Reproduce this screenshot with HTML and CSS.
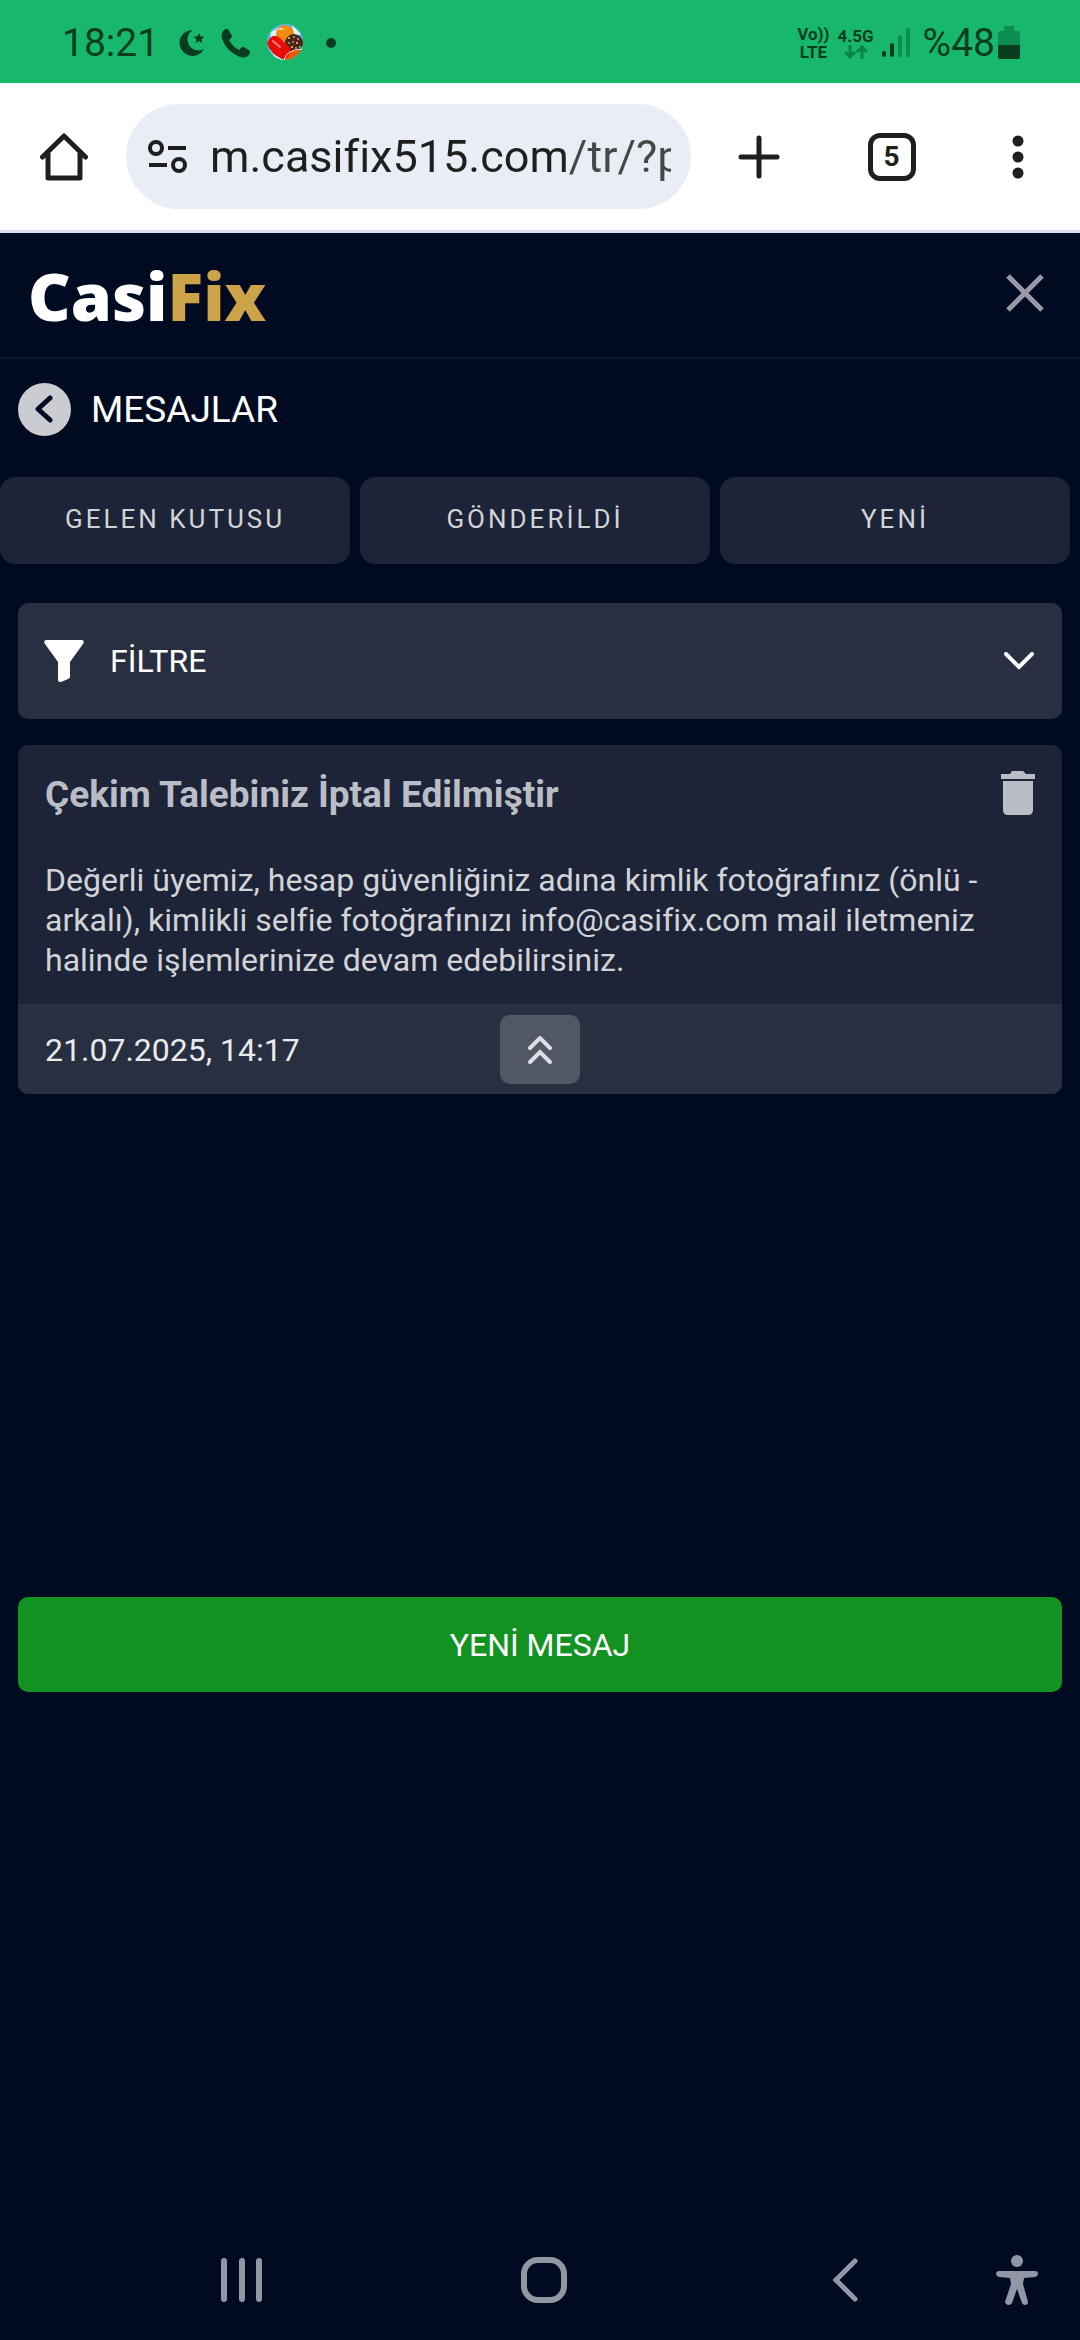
FILE: index.html
```html
<!DOCTYPE html>
<html lang="tr">
<head>
    <meta charset="UTF-8">
    <meta name="viewport" content="width=device-width, initial-scale=1.0">
    <title>CasiFix - Mesajlar</title>
    <link rel="stylesheet" href="styles.css">
</head>
<body>
    <div class="statusbar">
        <div class="status-left">
            <span class="time">18:21</span>
            <svg width="26" height="28" viewBox="0 0 26 28"><path d="M14 1A13 13 0 1 0 25 20A10.500 10.500 0 0 1 14 1Z" fill="#073d1f"/><path d="M20 4l1.500 3.300 3.800.400-2.800 2.500.800 3.800-3.300-1.900-3.300 1.900.800-3.800-2.800-2.500 3.800-.400z" fill="#073d1f"/></svg>
            <svg width="30" height="30" viewBox="0 0 30 30"><path d="M2 3Q5 0 7 1L11 8Q11 10 8 12Q11 18 18 22Q21 18 23 19L29 23Q30 25 27 28Q23 31 17 28Q6 23 2 13Q-1 7 2 3Z" fill="#073d1f"/></svg>
            <svg width="37" height="37" viewBox="0 0 37 37">
                <circle cx="18" cy="18" r="18" fill="#58b9ee"/>
                <path d="M4 8L13 3L10 12L3 16ZM25 1L34 10L27 12ZM2 25L17 37L8 33Z" fill="#e2f6ff"/>
                <ellipse cx="18" cy="10" rx="9" ry="9" fill="#f48a12"/>
                <ellipse cx="14" cy="5" rx="3" ry="1" fill="#ffd987"/>
                <circle cx="27" cy="19" r="9" fill="#4b2617"/>
                <path d="M16 36Q18 26 34 26Q29 36 16 36Z" fill="#ec5607"/>
                <path d="M3 14Q8 9 14 15L24 25Q23 34 15 35Q3 30 0 19Z" fill="#e90b09"/>
                <path d="M6 17L13 23" stroke="#ff8175" stroke-width="2" stroke-linecap="round"/>
                <path d="M17 36Q19 26 35 25" fill="none" stroke="#fff0d4" stroke-width="1"/>
                <g fill="#f7d84a"><circle cx="22" cy="14" r="1"/><circle cx="30" cy="19" r="1"/><circle cx="25" cy="23" r="1"/></g>
                <g fill="#77d35d"><circle cx="27" cy="13" r="1"/><circle cx="22" cy="19" r="1"/><circle cx="33" cy="23" r="1"/></g>
                <g fill="#ee83bd"><circle cx="31" cy="15" r="1"/><circle cx="26" cy="18" r="1"/><circle cx="29" cy="24" r="1"/></g>
            </svg>
            <span class="dot"></span>
        </div>
        <div class="status-right">
            <span class="volte"><span>Vo))</span><span>LTE</span></span>
            <span class="network">
                <span>4.5G</span>
                <svg width="24" height="14" viewBox="0 0 24 14"><path d="M6 0V12M1 7L6 12L11 7M18 14V2M13 7L18 2L23 7" fill="none" stroke="#0a8549" stroke-width="3"/></svg>
            </span>
            <svg class="signal" width="28" height="31" viewBox="0 0 28 31"><g fill="none" stroke-width="4" stroke-linecap="round"><path d="M2 26V28M10 18V28" stroke="#073d1f"/><path d="M18 10V28M26 3V28" stroke="#0d8e50"/></g></svg>
            <span class="percent">%48</span>
            <svg width="22" height="34" viewBox="0 0 22 34"><path d="M6 0H16V5H19Q22 5 22 8V20H0V8Q0 5 3 5H6Z" fill="#0d8e50"/><path d="M0 19H22V31Q22 33 19 33H3Q0 33 0 31Z" fill="#073d1f"/></svg>
        </div>
    </div>

    <div class="toolbar">
        <button class="home" aria-label="Ana sayfa">
            <svg width="48" height="48" viewBox="0 0 48 48"><path d="M2.500 24L24 3L45.500 24M8 19V45H40V19" fill="none" stroke="#1f1f1f" stroke-width="5" stroke-linecap="round" stroke-linejoin="round"/></svg>
        </button>
        <div class="address">
            <svg width="40" height="34" viewBox="0 0 40 34"><g fill="none" stroke="#1f1f1f" stroke-width="4"><circle cx="8" cy="8" r="6"/><circle cx="31" cy="25" r="6"/><path d="M20 8H38M1 25H19"/></g></svg>
            <input type="text" class="url" aria-label="Adres" value="m.casifix515.com/tr/?p">
        </div>
        <button class="new-tab" aria-label="Yeni sekme">
            <svg width="42" height="44" viewBox="0 0 42 44"><path d="M21 3V41M3 22H39" fill="none" stroke="#1f1f1f" stroke-width="5" stroke-linecap="round"/></svg>
        </button>
        <button class="tabs-count"><span>5</span></button>
        <button class="more" aria-label="Menü">
            <svg width="12" height="44" viewBox="0 0 12 44"><g fill="#1f1f1f"><circle cx="6" cy="6" r="5.500"/><circle cx="6" cy="22" r="5.500"/><circle cx="6" cy="38" r="5.500"/></g></svg>
        </button>
    </div>

    <header class="header">
        <a href="#" class="logo">Casi<span>Fix</span></a>
        <button class="close" aria-label="Kapat">
            <svg width="38" height="38" viewBox="0 0 38 38"><path d="M2 2L36 36M36 2L2 36" fill="none" stroke="#989ba7" stroke-width="5"/></svg>
        </button>
    </header>

    <main class="content">
        <div class="page-title">
            <button class="back" aria-label="Geri">
                <svg width="18" height="28" viewBox="0 0 18 28"><path d="M15 3L3 14L15 25" fill="none" stroke="#000b21" stroke-width="5" stroke-linecap="round" stroke-linejoin="round"/></svg>
            </button>
            <h1>MESAJLAR</h1>
        </div>

        <nav class="tabs">
            <button>GELEN KUTUSU</button>
            <button>GÖNDERİLDİ</button>
            <button>YENİ</button>
        </nav>

        <button class="filter">
            <svg width="40" height="42" viewBox="0 0 40 42"><path d="M2 0H38Q41 1 39 4L26 22V37Q26 38 24 39L17 42Q14 42 14 40V22L1 4Q-1 1 2 0Z" fill="#fff"/></svg>
            <span>FİLTRE</span>
            <svg class="arrow" width="30" height="18" viewBox="0 0 30 18"><path d="M2 2L15 15L28 2" fill="none" stroke="#fff" stroke-width="4" stroke-linecap="round"/></svg>
        </button>

        <div class="messages">
            <article class="message">
                <div class="message-head">
                    <h2>Çekim Talebiniz İptal Edilmiştir</h2>
                    <button class="delete" aria-label="Sil">
                        <svg width="34" height="44" viewBox="0 0 34 44"><path d="M0 3H9L11 0H22L25 3H34V8H0ZM2 10H32V39Q32 44 27 44H7Q2 44 2 39Z" fill="#bbbdc6"/></svg>
                    </button>
                </div>
                <p class="message-text">Değerli üyemiz, hesap güvenliğiniz adına kimlik fotoğrafınız (önlü - arkalı), kimlikli selfie fotoğrafınızı info@casifix.com mail iletmeniz halinde işlemlerinize devam edebilirsiniz.</p>
                <div class="message-foot">
                    <time>21.07.2025, 14:17</time>
                    <button class="collapse" aria-label="Kapat">
                        <svg width="24" height="28" viewBox="0 0 24 28"><path d="M2 12L12 2L22 12M2 26L12 16L22 26" fill="none" stroke="#dedfe4" stroke-width="4" stroke-linecap="round"/></svg>
                    </button>
                </div>
            </article>
        </div>

        <button class="new-message">YENİ MESAJ</button>
    </main>

    <nav class="bottombar">
        <button aria-label="Son uygulamalar">
            <svg width="42" height="44" viewBox="0 0 42 44"><path d="M3 3V41M21 3V41M38 3V41" fill="none" stroke="#9297a6" stroke-width="6" stroke-linecap="round"/></svg>
        </button>
        <button aria-label="Ana ekran">
            <svg width="46" height="46" viewBox="0 0 46 46"><rect x="3" y="3" width="40" height="40" rx="14" fill="none" stroke="#9297a6" stroke-width="6"/></svg>
        </button>
        <button aria-label="Geri">
            <svg width="26" height="44" viewBox="0 0 26 44"><path d="M23 3L4 22L23 41" fill="none" stroke="#9297a6" stroke-width="5" stroke-linecap="round"/></svg>
        </button>
        <button class="access" aria-label="Erişilebilirlik">
            <svg width="42" height="52" viewBox="0 0 42 52"><g fill="#9297a6"><circle cx="21" cy="7" r="6"/><path d="M3 17H39Q42 17 42 20Q42 22 39 23L28 24L27 30L32 48Q32 51 29 51Q27 51 26 49L21 35L16 49Q15 51 12 51Q9 50 9 48L15 30L14 24L3 23Q0 22 0 20Q0 17 3 17Z"/></g></svg>
        </button>
    </nav>
</body>
</html>
```
FILE: styles.css
```css
*{
    padding: 0;
    margin: 0;
    box-sizing: border-box;
}
body{
    min-height: 100vh;
    display: flex;
    flex-direction: column;
    background: #000b21;
    color: #fff;
    font-family: Roboto, "Noto Sans", sans-serif;
    font-size: 32px;
}
button{
    border: none;
    background: none;
    color: inherit;
    font: inherit;
    cursor: pointer;
    display: flex;
    justify-content: center;
    align-items: center;
}
svg{
    display: block;
    flex: none;
}

/* status bar */
.statusbar{
    height: 83px;
    padding: 2px 60px 0 62px;
    background: #18b86c;
    color: #073d1f;
    display: flex;
    justify-content: space-between;
    align-items: center;
}
.status-left{
    display: flex;
    align-items: center;
    gap: 16px;
}
.time,
.percent{
    font-size: 39px;
    line-height: 48px;
}
.time{
    margin-right: 4px;
}
.dot{
    width: 10px;
    height: 10px;
    margin-left: 6px;
    border-radius: 50%;
    background: #073d1f;
}
.status-right{
    display: flex;
    align-items: center;
    gap: 3px;
}
.volte,
.network{
    margin-right: 5px;
    display: flex;
    flex-direction: column;
    align-items: center;
    font-size: 17px;
    line-height: 18px;
    font-weight: 700;
}
.signal{
    margin-right: 10px;
}

/* browser toolbar */
.toolbar{
    height: 150px;
    padding-left: 40px;
    background: #fff;
    border-bottom: 3px solid #dae0ea;
    display: flex;
    align-items: center;
}
.home{
    margin-right: 38px;
}
.address{
    flex: 1;
    min-width: 0;
    height: 105px;
    padding: 0 20px 0 22px;
    border-radius: 53px;
    background: #e8edf6;
    display: flex;
    align-items: center;
    gap: 22px;
}
.url{
    flex: 1;
    min-width: 0;
    height: 60px;
    border: none;
    outline: none;
    font: 45px Roboto, sans-serif;
    color: transparent;
    /* the domain is darker than the path */
    background: linear-gradient(90deg, #1f1f1f 355px, #474747 355px);
    -webkit-background-clip: text;
    background-clip: text;
}
.new-tab{
    width: 136px;
    height: 105px;
}
.tabs-count{
    width: 129px;
    height: 105px;
}
.tabs-count span{
    width: 48px;
    height: 48px;
    border: 5px solid #1f1f1f;
    border-radius: 12px;
    color: #1f1f1f;
    font-size: 28px;
    line-height: 38px;
    font-weight: 700;
}
.more{
    width: 124px;
    height: 105px;
}

/* site header */
.header{
    height: 126px;
    padding: 0 36px 0 28px;
    border-bottom: 2px solid #0f172e;
    display: flex;
    justify-content: space-between;
    align-items: center;
}
.logo{
    color: #fff;
    font-family: "Open Sans", sans-serif;
    font-size: 66px;
    line-height: 80px;
    font-weight: 800;
    text-decoration: none;
}
.logo span{
    color: #cda349;
}
.close{
    height: 60px;
    margin-bottom: 4px;
}

.page-title{
    height: 118px;
    padding: 0 18px 18px;
    display: flex;
    align-items: center;
    gap: 20px;
}
.page-title h1{
    font-size: 37px;
    font-weight: 400;
}
.back{
    width: 53px;
    height: 53px;
    padding-right: 2px;
    border-radius: 50%;
    background: #cbccd2;
}
.tabs{
    padding-right: 10px;
    display: flex;
    gap: 10px;
}
.tabs button{
    flex: 1;
    height: 87px;
    padding-bottom: 4px;
    border-radius: 15px;
    background: #1d2438;
    color: #d2d3d7;
    font-size: 26px;
    letter-spacing: 3px;
}
.filter{
    width: calc(100% - 36px);
    height: 116px;
    margin: 39px 18px 26px;
    padding: 0 28px 0 26px;
    border-radius: 10px;
    background: #272f41;
    justify-content: flex-start;
    gap: 26px;
}
.arrow{
    margin-left: auto;
}

/* message list */
.messages{
    min-height: 852px;
    padding: 0 18px;
}
.message{
    border-radius: 10px;
    background: #1d2438;
    overflow: hidden;
}
.message-head{
    padding: 26px 27px 0;
    display: flex;
    justify-content: space-between;
    align-items: flex-start;
}
.message-head h2{
    color: #bbbdc6;
    font-size: 37px;
    line-height: 48px;
    font-weight: 700;
}
.message-text{
    padding: 41px 27px 24px;
    color: #d2d3d7;
    line-height: 40px;
}
.message-foot{
    padding: 10px 27px;
    border-top: 1px solid #2d3446;
    background: #272f41;
    display: grid;
    grid-template-columns: 1fr 80px 1fr;
    align-items: center;
}
.message-foot time{
    color: #e9eaec;
}
.collapse{
    height: 69px;
    border-radius: 10px;
    background: #525766;
}
.new-message{
    width: calc(100% - 36px);
    height: 95px;
    margin: 0 18px;
    border-radius: 10px;
    background: #129221;
}

/* android navigation */
.bottombar{
    height: 120px;
    margin-top: auto;
    padding: 0 42px 0 91px;
    display: flex;
    align-items: center;
}
.bottombar button{
    flex: 1;
    height: 100px;
}
.bottombar .access{
    flex: 0 0 41px;
}
```
